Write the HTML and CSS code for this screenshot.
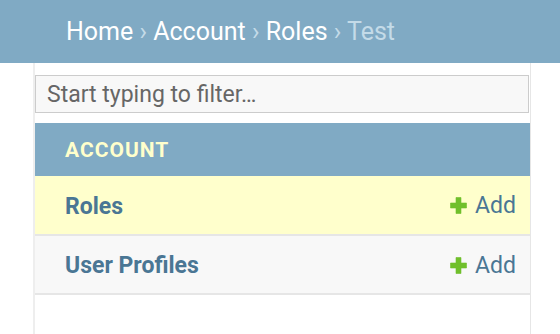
FILE: index.html
```html
<!DOCTYPE html>
<html lang="en">
<head>
  <meta charset="UTF-8">
  <title>Test | Roles</title>
  <link rel="stylesheet" href="styles.css">
</head>
<body>

<div class="breadcrumbs">
  <a href="#">Home</a> <span class="sep">›</span>
  <a href="#">Account</a> <span class="sep">›</span>
  <a href="#">Roles</a> <span class="sep">›</span>
  <span class="current">Test</span>
</div>

<nav class="sidebar">
  <input type="search" class="nav-filter" placeholder="Start typing to filter…">

  <table class="module">
    <caption>Account</caption>
    <tbody>
      <tr class="current-model">
        <th><a href="#">Roles</a></th>
        <td><a href="#" class="addlink"><svg viewBox="0 0 17 17" width="17" height="17"><path d="M6 0.5h5v5.5h5.5v5H11v5.5H6V11H0.5V6H6z" fill="#70bf2b" stroke="#70bf2b" stroke-width="0.6" stroke-linejoin="round"/></svg>Add</a></td>
      </tr>
      <tr>
        <th><a href="#">User Profiles</a></th>
        <td><a href="#" class="addlink"><svg viewBox="0 0 17 17" width="17" height="17"><path d="M6 0.5h5v5.5h5.5v5H11v5.5H6V11H0.5V6H6z" fill="#70bf2b" stroke="#70bf2b" stroke-width="0.6" stroke-linejoin="round"/></svg>Add</a></td>
      </tr>
    </tbody>
  </table>
</nav>

</body>
</html>
```

FILE: styles.css
```css
* { box-sizing: border-box; }
body {
  margin: 0;
  font-family: Roboto, 'Liberation Sans', sans-serif;
  background: #fff;
  color: #333;
  height: 334px;
  overflow: hidden;
}
a { text-decoration: none; }

.breadcrumbs {
  height: 63px;
  background: #80aac4;
  color: #c4dbe8;
  font-size: 25px;
  padding: 17px 0 0 66px;
  white-space: nowrap;
}
.breadcrumbs a { color: #fff; }
.breadcrumbs .sep { color: #c4dbe8; }
.breadcrumbs .current { color: #c4dbe8; }

.sidebar {
  margin-left: 33px;
  width: 498px;
  height: 271px;
  border-left: 2px solid #eeeeee;
  border-right: 1px solid #e6e6e6;
  padding-top: 12px;
}
.nav-filter {
  display: block;
  width: 494px;
  height: 38px;
  margin: 0 0 10px 0;
  padding: 0 11px;
  border: 1px solid #cccccc;
  border-radius: 0;
  background: #f8f8f8;
  font-family: Roboto, sans-serif;
  font-size: 23px;
  color: #333;
  outline: none;
}
.nav-filter::placeholder { color: #666; }

.module {
  width: 495px;
  border-collapse: collapse;
}
.module caption {
  background: #80aac4;
  color: #ffffcc;
  text-align: left;
  font-size: 21px;
  font-weight: 700;
  letter-spacing: 1px;
  text-transform: uppercase;
  height: 53px;
  padding: 15px 0 0 30px;
}
.module tr {
  height: 59px;
  background: #f8f8f8;
  border-bottom: 2px solid #e6e6e6;
}
.module tr.current-model { background: #ffffcc; }
.module th {
  text-align: left;
  font-weight: 700;
  font-size: 23px;
  padding: 2px 0 0 30px;
}
.module th a { color: #4a7694; }
.module td {
  text-align: right;
  padding: 2px 14px 0 0;
  font-size: 23px;
}
.addlink {
  color: #4a7694;
  display: inline-flex;
  align-items: center;
  gap: 8px;
}
.addlink svg { display: block; }
```
